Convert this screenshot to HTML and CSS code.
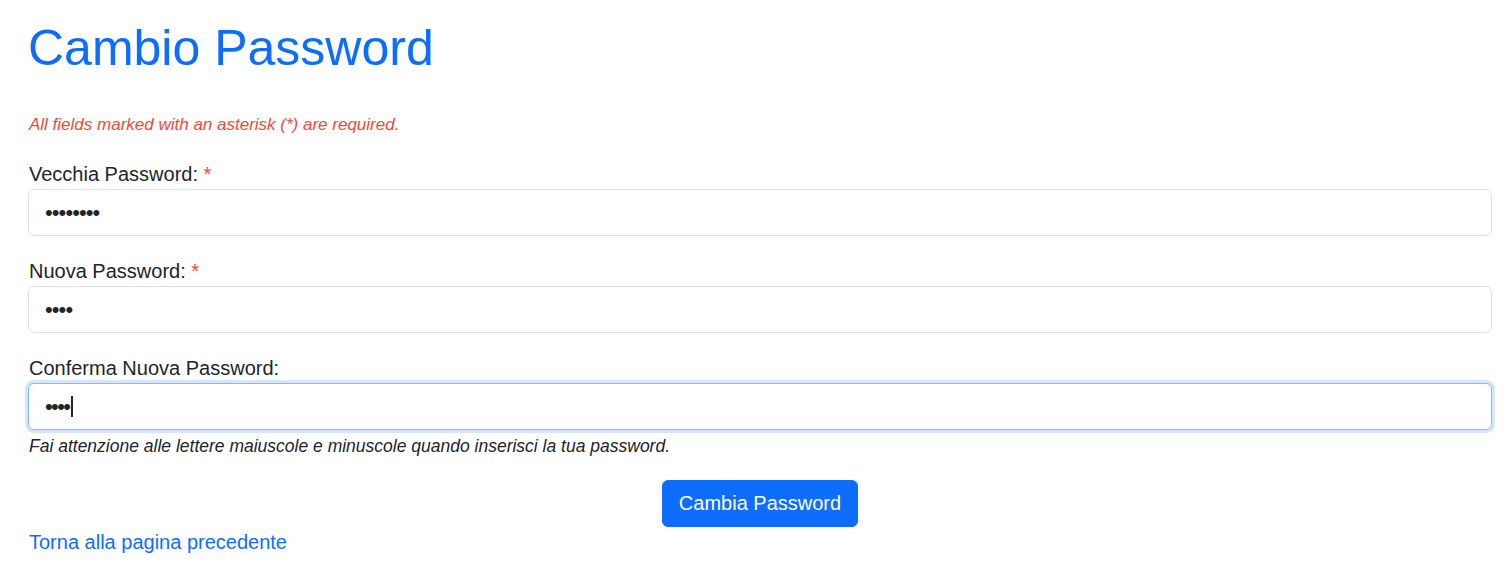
FILE: index.html
```html
<!DOCTYPE html>
<html lang="it">
<head>
<meta charset="utf-8">
<title>Cambio Password</title>
<link rel="stylesheet" href="styles.css">
</head>
<body>
<main class="page">
  <h1 class="title">Cambio Password</h1>
  <p class="required-note">All fields marked with an asterisk (*) are required.</p>
  <form class="form">
    <div class="group">
      <label class="label" for="old">Vecchia Password: <span class="star">*</span></label>
      <input class="field" id="old" type="password" value="12345678">
    </div>
    <div class="group">
      <label class="label" for="new">Nuova Password: <span class="star">*</span></label>
      <input class="field" id="new" type="password" value="1234">
    </div>
    <div class="group last">
      <label class="label" for="conf">Conferma Nuova Password:</label>
      <div class="field focused" id="conf"><span class="dots">••••</span><span class="caret"></span></div>
      <p class="help">Fai attenzione alle lettere maiuscole e minuscole quando inserisci la tua password.</p>
    </div>
    <div class="actions">
      <button class="btn" type="button">Cambia Password</button>
    </div>
  </form>
  <a class="back" href="#">Torna alla pagina precedente</a>
</main>
</body>
</html>
```
FILE: styles.css
```css
* { box-sizing: border-box; }
html, body { margin: 0; padding: 0; background: #fff; }
body {
  font-family: "Liberation Sans", Arial, sans-serif;
  color: #212529;
}
.page {
  padding: 18px 19px 0 28px;
}
.title {
  margin: 0;
  font-size: 50px;
  font-weight: 400;
  line-height: 60px;
  color: #0d6efd;
}
.required-note {
  margin: 34px 0 0 1px;
  font-size: 17px;
  line-height: 26px;
  font-style: italic;
  color: #e74c3c;
}
.form { margin-top: 21px; }
.group { margin-bottom: 20px; }
.group.last { margin-bottom: 21px; }
.label {
  display: block;
  margin: 0 0 0 1px;
  font-size: 20px;
  line-height: 30px;
}
.star { color: #e74c3c; }
.field {
  display: block;
  width: 100%;
  height: 47px;
  padding: 0 16px;
  font-family: "Liberation Sans", Arial, sans-serif;
  font-size: 22px;
  letter-spacing: -0.9px;
  color: #212529;
  background: #fff;
  border: 1px solid #dee2e6;
  border-radius: 6px;
  outline: none;
}
.field.focused {
  display: flex;
  align-items: center;
  border-color: #86b7fe;
  box-shadow: 0 0 0 3px rgba(13, 110, 253, 0.18);
}
.dots {
  font-size: 22px;
  line-height: 1;
  letter-spacing: -1.6px;
}
.caret {
  width: 2px;
  height: 21px;
  background: #212529;
  margin-left: 2px;
}
.help {
  margin: 3px 0 0 1px;
  font-size: 17.5px;
  line-height: 26px;
  font-style: italic;
}
.actions {
  display: flex;
  justify-content: center;
}
.btn {
  height: 47px;
  padding: 0 16px;
  font-family: "Liberation Sans", Arial, sans-serif;
  font-size: 20px;
  color: #fff;
  background: #0d6efd;
  border: 1px solid #0d6efd;
  border-radius: 6px;
}
.back {
  display: inline-block;
  margin-left: 1px;
  font-size: 20px;
  line-height: 30px;
  color: #0d6efd;
  text-decoration: none;
}
```
